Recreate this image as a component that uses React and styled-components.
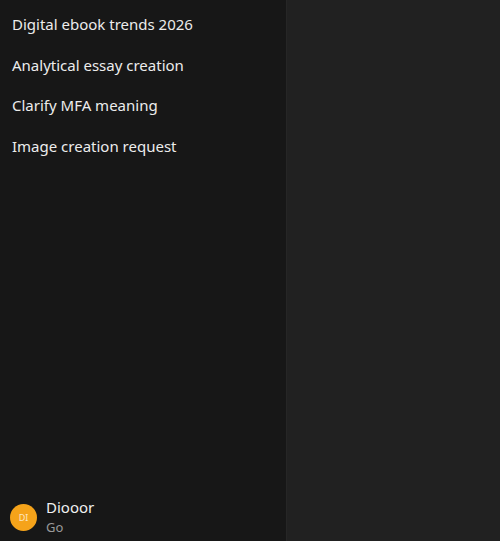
import React from "react";
import styled, { createGlobalStyle } from "styled-components";

const Global = createGlobalStyle`
  html, body, #root { margin: 0; padding: 0; height: 100%; }
  body { background: #212121; font-family: "Noto Sans", "Open Sans", sans-serif; }
`;

const Shell = styled.div`
  display: flex;
  height: 541px;
  width: 500px;
  overflow: hidden;
`;

const Sidebar = styled.aside`
  width: 286px;
  flex: none;
  background: #171717;
  border-right: 1px solid #262626;
  display: flex;
  flex-direction: column;
`;

const History = styled.nav`
  display: flex;
  flex-direction: column;
  padding-top: 4px;
  flex: 1;
`;

const Item = styled.div`
  height: 40.6px;
  display: flex;
  align-items: center;
  padding-left: 12px;
  color: #ececec;
  font-size: 15px;
`;

const Profile = styled.div`
  display: flex;
  align-items: center;
  gap: 9px;
  padding: 0 0 0 10px;
  height: 48px;
`;

const Avatar = styled.div`
  width: 27px;
  height: 27px;
  border-radius: 50%;
  background: #f5a31a;
  color: #fde7c2;
  font-size: 9px;
  display: flex;
  align-items: center;
  justify-content: center;
`;

const Names = styled.div`
  display: flex;
  flex-direction: column;
  line-height: 20px;
`;

const Name = styled.span`
  color: #f0f0f0;
  font-size: 15px;
`;

const Plan = styled.span`
  color: #9a9a9a;
  font-size: 13px;
`;

const Main = styled.main`
  flex: 1;
  background: #212121;
`;

const chats = [
  "Digital ebook trends 2026",
  "Analytical essay creation",
  "Clarify MFA meaning",
  "Image creation request",
];

export default function App() {
  return (
    <>
      <Global />
      <Shell>
        <Sidebar>
          <History>
            {chats.map((c) => (
              <Item key={c}>{c}</Item>
            ))}
          </History>
          <Profile>
            <Avatar>DI</Avatar>
            <Names>
              <Name>Diooor</Name>
              <Plan>Go</Plan>
            </Names>
          </Profile>
        </Sidebar>
        <Main />
      </Shell>
    </>
  );
}
